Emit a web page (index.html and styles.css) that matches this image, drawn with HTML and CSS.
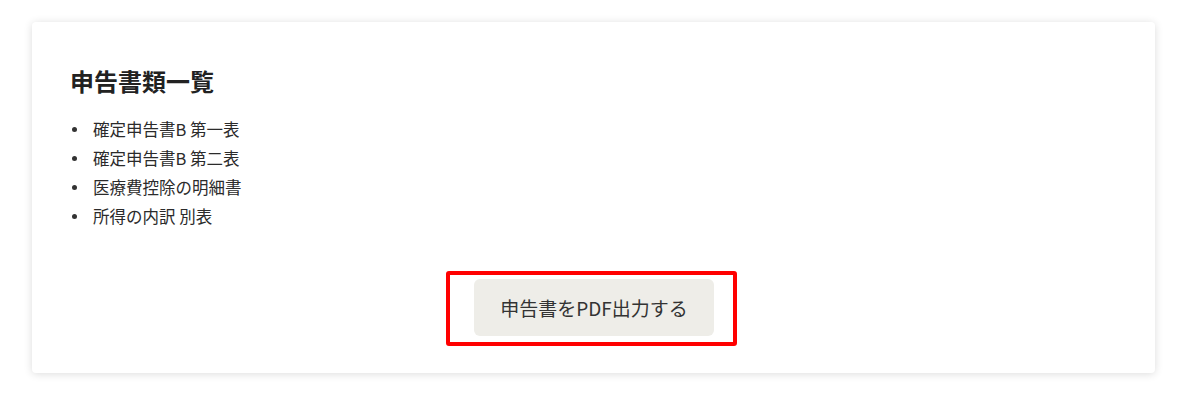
FILE: index.html
```html
<!DOCTYPE html>
<html lang="ja">
<head>
    <meta charset="UTF-8">
    <meta name="viewport" content="width=device-width, initial-scale=1.0">
    <title>申告書類一覧</title>
    <link rel="stylesheet" href="styles.css">
</head>
<body>
<div class="card">
    <h2>申告書類一覧</h2>
    <ul class="docs">
        <li>確定申告書B 第一表</li>
        <li>確定申告書B 第二表</li>
        <li>医療費控除の明細書</li>
        <li>所得の内訳 別表</li>
    </ul>
    <div class="actions">
        <div class="highlight">
            <button class="pdf-btn" type="button">申告書をPDF出力する</button>
        </div>
    </div>
</div>
</body>
</html>
```

FILE: styles.css
```css
body { font-family: "Noto Sans CJK JP", "Noto Sans", sans-serif; background:#fff; margin:0; padding:0 0 20px; color:#333; }
.card { width:1123px; box-sizing:border-box; margin:22px 0 0 32px; padding:41px 38px 27px; background:#fff; border-radius:4px; box-shadow:0 1px 8px rgba(0,0,0,0.14); }
h2 { margin:0; font-size:24px; line-height:36px; font-weight:bold; color:#222; }
.docs { margin:16px 0 0; padding:0; list-style:none; font-size:16.5px; line-height:29px; color:#2b2b2b; }
.docs li { display:flex; align-items:center; }
.docs li::before { content:""; width:5px; height:5px; border-radius:50%; background:#333; margin:0 16.5px 0 1.5px; }
.actions { display:flex; justify-content:center; margin-top:40px; padding-right:4px; }
.highlight { border:4px solid #ff0000; border-radius:3px; padding:4px 19px 6px 24px; }
.pdf-btn { display:block; width:240px; height:57px; border:none; border-radius:6px; background:#eeede8; color:#333; font-family:inherit; font-size:19px; cursor:pointer; }
```
